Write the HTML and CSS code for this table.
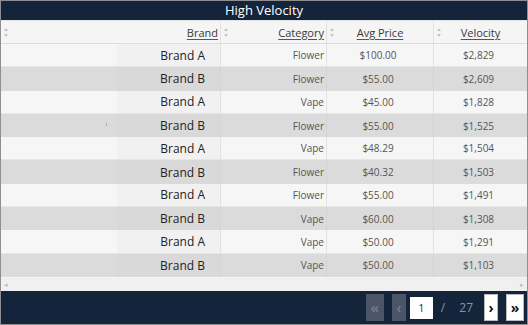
FILE: index.html
```html
<!DOCTYPE html>
<html>
<head>
<meta charset="utf-8">
<link rel="stylesheet" href="styles.css">
</head>
<body>
<div class="widget">
  <div class="title">High Velocity</div>
  <div class="grid head">
    <div class="hcell right"><span class="sort"></span><span class="lbl">Brand</span></div>
    <div class="hcell right"><span class="sort"></span><span class="lbl">Category</span></div>
    <div class="hcell center"><span class="sort"></span><span class="lbl">Avg Price</span></div>
    <div class="hcell center last"><span class="sort"></span><span class="lbl">Velocity</span></div>
  </div>
  <div class="body">
    <div class="grid row odd"><div class="cell brand"><span class="bbox">Brand A</span></div><div class="cell right">Flower</div><div class="cell center">$100.00</div><div class="cell center last">$2,829</div></div>
    <div class="grid row even"><div class="cell brand"><span class="bbox">Brand B</span></div><div class="cell right">Flower</div><div class="cell center">$55.00</div><div class="cell center last">$2,609</div></div>
    <div class="grid row odd"><div class="cell brand"><span class="bbox">Brand A</span></div><div class="cell right">Vape</div><div class="cell center">$45.00</div><div class="cell center last">$1,828</div></div>
    <div class="grid row even"><div class="cell brand"><span class="mark"></span><span class="bbox">Brand B</span></div><div class="cell right">Flower</div><div class="cell center">$55.00</div><div class="cell center last">$1,525</div></div>
    <div class="grid row odd"><div class="cell brand"><span class="bbox">Brand A</span></div><div class="cell right">Vape</div><div class="cell center">$48.29</div><div class="cell center last">$1,504</div></div>
    <div class="grid row even"><div class="cell brand"><span class="bbox">Brand B</span></div><div class="cell right">Flower</div><div class="cell center">$40.32</div><div class="cell center last">$1,503</div></div>
    <div class="grid row odd"><div class="cell brand"><span class="bbox">Brand A</span></div><div class="cell right">Flower</div><div class="cell center">$55.00</div><div class="cell center last">$1,491</div></div>
    <div class="grid row even"><div class="cell brand"><span class="bbox">Brand B</span></div><div class="cell right">Vape</div><div class="cell center">$60.00</div><div class="cell center last">$1,308</div></div>
    <div class="grid row odd"><div class="cell brand"><span class="bbox">Brand A</span></div><div class="cell right">Vape</div><div class="cell center">$50.00</div><div class="cell center last">$1,291</div></div>
    <div class="grid row even"><div class="cell brand"><span class="bbox">Brand B</span></div><div class="cell right">Vape</div><div class="cell center">$50.00</div><div class="cell center last">$1,103</div></div>
  </div>
  <div class="hscroll"><span class="arr">&#9666;</span><span class="arr">&#9656;</span></div>
  <div class="footer">
    <div class="pager">
      <span class="pbtn wide disabled">&laquo;</span>
      <span class="pbtn disabled prev">&lsaquo;</span>
      <span class="pinput">1</span>
      <span class="ptext slash">/</span>
      <span class="ptext total">27</span>
      <span class="pbtn active next">&rsaquo;</span>
      <span class="pbtn wide active last">&raquo;</span>
    </div>
  </div>
</div>
</body>
</html>
```
FILE: styles.css
```css
html, body {
  margin: 0;
  padding: 0;
  background: #ffffff;
}
body {
  font-family: "Open Sans", "Liberation Sans", sans-serif;
}
.widget {
  width: 526px;
  height: 323px;
  border: 1px solid #8f8f8f;
  display: flex;
  flex-direction: column;
  background: #f6f6f6;
}
.title {
  height: 19px;
  background: #14243b;
  color: #ffffff;
  font-size: 13px;
  line-height: 19px;
  text-align: center;
}
.grid {
  display: grid;
  grid-template-columns: 220px 106px 107px 93px;
}
.head {
  height: 24px;
  background: #f5f5f5;
  border-top: 1px solid #e3e3e3;
  border-bottom: 1px solid #dcdcdc;
  box-sizing: border-box;
}
.hcell {
  display: flex;
  align-items: center;
  border-right: 1px solid #e2e2e2;
  padding: 0 2px 0 3px;
  font-size: 11px;
  color: #3a3a3a;
}
.hcell.last, .cell.last { border-right: none; }
.hcell .lbl {
  text-decoration: underline;
  text-underline-offset: 2px;
  text-decoration-color: #555;
}
.hcell.right .lbl { margin-left: auto; }
.hcell.center .lbl { margin: 0 auto; padding-right: 6px; }
.sort {
  width: 5px;
  height: 9px;
  position: relative;
  flex: none;
}
.sort::before, .sort::after {
  content: "";
  position: absolute;
  left: 0;
  border-left: 2.5px solid transparent;
  border-right: 2.5px solid transparent;
}
.sort::before { top: 0; border-bottom: 3.5px solid #c4c4c4; }
.sort::after { bottom: 0; border-top: 3.5px solid #c4c4c4; }
.body {
  display: flex;
  flex-direction: column;
}
.row {
  height: 23.3px;
  box-sizing: border-box;
}
.row.odd { background: #f6f6f6; border-bottom: 1px solid #e6e6e6; }
.row.even { background: #dbdbdb; }
.cell {
  display: flex;
  align-items: center;
  border-right: 1px solid #e2e2e2;
  font-size: 10px;
  color: #555;
  padding: 0 2px;
  white-space: nowrap;
}
.row.even .cell { border-right-color: #d4d4d4; }
.row.even .cell.last { border-right: none; }
.cell.right { justify-content: flex-end; }
.cell.center { justify-content: center; padding-right: 6px; }
.cell.brand {
  justify-content: flex-end;
  padding: 0;
  position: relative;
}
.bbox {
  width: 103px;
  height: 100%;
  box-sizing: border-box;
  padding-right: 15px;
  display: flex;
  align-items: center;
  justify-content: flex-end;
  font-size: 12px;
  color: #222;
}
.row.odd .bbox { background: #f1f1f1; }
.row.even .bbox { background: #d9d9d9; }
.mark {
  position: absolute;
  left: 105px;
  top: 9px;
  width: 1px;
  height: 3px;
  background: #e0a060;
}
.hscroll {
  height: 13px;
  background: #f0f0f0;
  display: flex;
  justify-content: space-between;
  align-items: center;
  padding: 0 3px;
  font-size: 7px;
  color: #c0c0c0;
  margin-top: auto;
}
.footer {
  height: 33px;
  background: #14243b;
  display: flex;
  justify-content: flex-end;
  align-items: center;
  padding-right: 3px;
}
.pager {
  display: flex;
  align-items: center;
}
.pbtn {
  width: 14px;
  height: 27px;
  display: flex;
  align-items: center;
  justify-content: center;
  font-size: 14px;
  font-weight: bold;
  box-sizing: border-box;
}
.pbtn.wide { width: 18px; }
.pbtn.disabled {
  background: #4a5567;
  color: #6f7a8a;
}
.pbtn.active {
  background: #ffffff;
  color: #111;
  border: 1px solid #bbb;
}
.prev { margin-left: 8px; }
.next { margin-left: 11px; }
.pbtn.last { margin-left: 8px; }
.pinput {
  width: 23px;
  height: 22px;
  background: #ffffff;
  color: #222;
  font-size: 10px;
  display: flex;
  align-items: center;
  justify-content: center;
  margin-left: 4px;
}
.ptext {
  color: #8a93a3;
  font-size: 12px;
}
.slash { margin-left: 8px; }
.total { margin-left: 14px; }
```
